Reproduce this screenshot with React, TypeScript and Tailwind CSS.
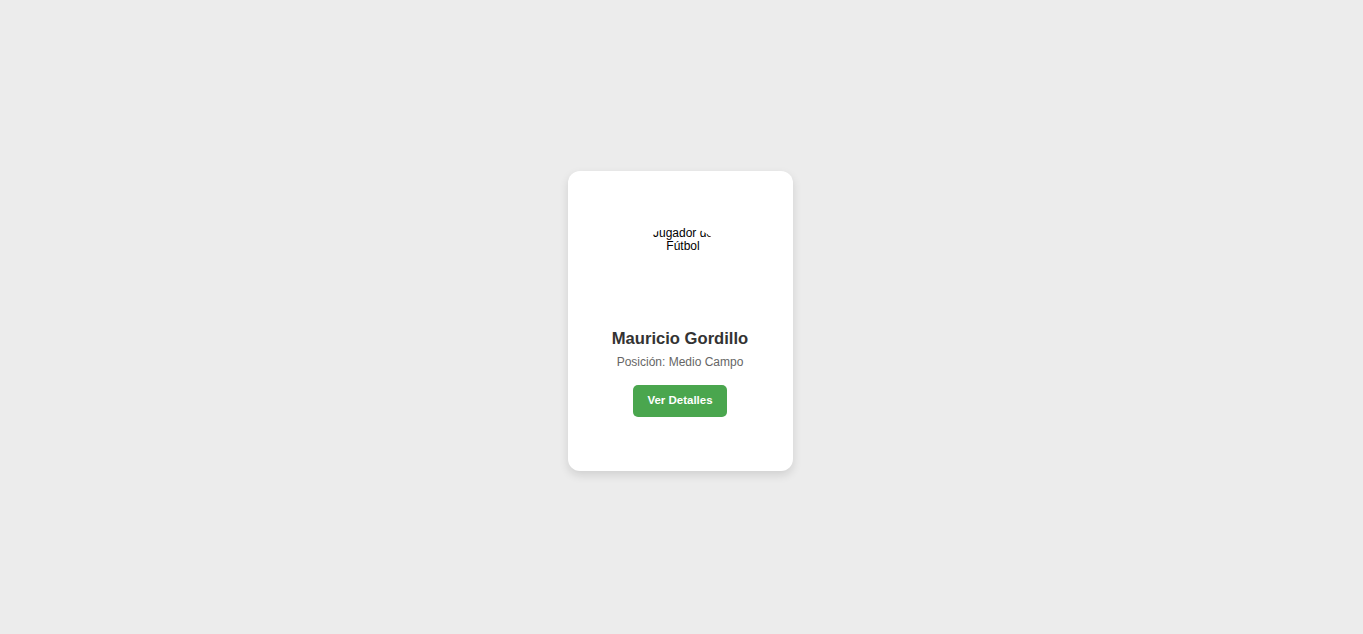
export default function App() {
  return (
    <div
      className="min-h-screen w-full bg-[#ececec] flex items-center justify-center pt-[8px] pr-[2px]"
      style={{ fontFamily: '"Liberation Sans", Arial, sans-serif' }}
    >
      <div className="w-[225px] h-[300px] bg-white rounded-[12px] shadow-[0_4px_10px_rgba(0,0,0,0.12)] flex flex-col items-center justify-center text-center pr-[1px]">
        <div className="w-[100px] h-[100px] rounded-full overflow-hidden text-[12px] leading-[13px] text-black">
          <div className="pl-[14px] pr-[8px] pt-[1px]">Jugador de Fútbol</div>
        </div>
        <h3 className="mt-[2px] text-[16.6px] leading-[22px] font-bold text-[#333]">Mauricio Gordillo</h3>
        <p className="mt-[4px] text-[12px] leading-[16px] text-[#666]">Posición: Medio Campo</p>
        <button className="mt-[15px] w-[94px] h-[32px] bg-[#4aa64e] text-white text-[11.5px] font-bold rounded-[5px]">
          Ver Detalles
        </button>
      </div>
    </div>
  );
}
